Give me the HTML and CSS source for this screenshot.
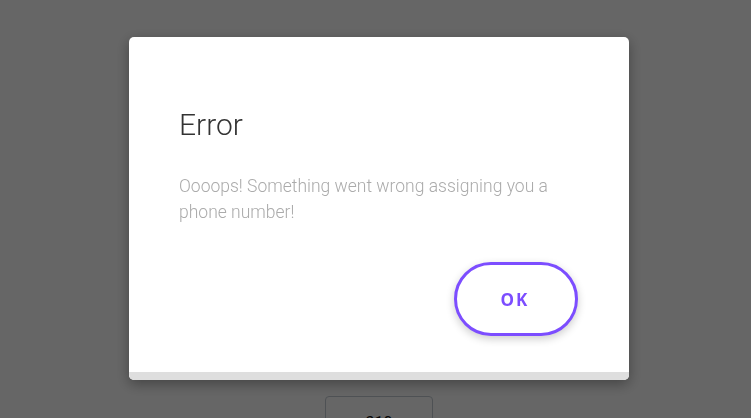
FILE: index.html
```html
<!DOCTYPE html>
<html>
<head>
<meta charset="utf-8">
<link rel="stylesheet" href="styles.css">
</head>
<body>
<div class="page">
  <button class="bg-button">310</button>
</div>
<div class="overlay">
  <div class="modal">
    <div class="modal-body">
      <h2 class="title">Error</h2>
      <p class="message">Oooops! Something went wrong assigning you a phone number!</p>
      <div class="actions">
        <button class="ok">OK</button>
      </div>
    </div>
    <div class="modal-footer"></div>
  </div>
</div>
</body>
</html>
```

FILE: styles.css
```css
html, body {
  margin: 0;
  padding: 0;
  width: 751px;
  height: 418px;
  overflow: hidden;
  background: #ffffff;
  font-family: Roboto, "Liberation Sans", sans-serif;
}
.page {
  width: 751px;
  height: 418px;
  display: flex;
  justify-content: center;
  align-items: flex-start;
  padding-top: 396px;
  box-sizing: border-box;
}
.bg-button {
  width: 108px;
  height: 44px;
  margin-left: 7px;
  border: 1px solid #c3cbd3;
  border-radius: 4px;
  background: #ffffff;
  font-family: Roboto, sans-serif;
  font-size: 16px;
  line-height: 16px;
  color: #111;
  padding: 10px 0 0 0;
}
.overlay {
  position: fixed;
  inset: 0;
  background: rgba(0, 0, 0, 0.6);
  display: flex;
  justify-content: center;
  align-items: flex-start;
  padding-top: 37px;
  box-sizing: border-box;
}
.modal {
  width: 500px;
  margin-left: 7px;
  background: #ffffff;
  border-radius: 5px;
  overflow: hidden;
  box-shadow: 0 4px 14px rgba(0, 0, 0, 0.35);
  display: flex;
  flex-direction: column;
}
.modal-body {
  padding: 69px 50px 36px 50px;
}
.title {
  margin: 0;
  font-weight: 300;
  font-size: 30px;
  line-height: 38px;
  color: #333;
}
.message {
  margin: 29px 0 0 0;
  font-weight: 300;
  font-size: 17.5px;
  line-height: 26px;
  color: #ababab;
  width: 400px;
}
.actions {
  display: flex;
  justify-content: flex-end;
  margin-top: 37px;
}
.ok {
  width: 124px;
  height: 74px;
  border: 3px solid #7c4dff;
  border-radius: 37px;
  background: #fff;
  color: #7c4dff;
  font-family: "Open Sans", Lato, sans-serif;
  font-weight: 700;
  font-size: 17px;
  letter-spacing: 2px;
  padding-left: 4px;
  box-shadow: 0 3px 8px rgba(0, 0, 0, 0.2);
  margin-right: 1px;
}
.modal-footer {
  height: 8px;
  background: #dedede;
}
```
